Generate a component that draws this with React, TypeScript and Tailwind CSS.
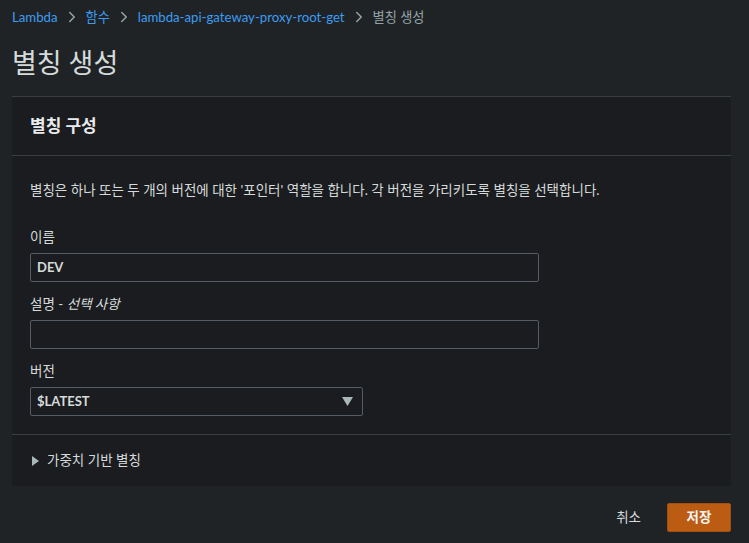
import { ChevronRight } from "lucide-react";

const font = { fontFamily: 'Lato, "Noto Sans CJK KR", sans-serif' };

function Crumb({ label, last }: { label: string; last?: boolean }) {
  return (
    <span className="flex items-center">
      <span className={last ? "text-[#95a5a6]" : "text-[#3d9cf0]"}>{label}</span>
      {!last && <ChevronRight className="w-[18px] h-[18px] mx-[5px] text-[#95a5a6]" strokeWidth={2} />}
    </span>
  );
}

export default function App() {
  return (
    <div
      className="w-[749px] h-[543px] bg-[#1f2326] text-[#d5dbdb] overflow-hidden"
      style={font}
    >
      <div className="pl-3 pr-[18px] pt-[7px]">
        {/* breadcrumb */}
        <nav className="flex items-center text-[13.2px] leading-[20px]">
          <Crumb label="Lambda" />
          <Crumb label="함수" />
          <Crumb label="lambda-api-gateway-proxy-root-get" />
          <Crumb label="별칭 생성" last />
        </nav>

        <h1 className="text-[27px] leading-[34px] mt-[19px] text-[#d5dbdb]">별칭 생성</h1>

        {/* panel */}
        <section className="mt-[16px] bg-[#1b1c1f] border-t border-[#3b3e41]">
          <div className="h-[59px] px-[18px] flex items-center border-b border-[#3b3e41]">
            <h2 className="text-[17px] font-bold text-[#e9ebed]">별칭 구성</h2>
          </div>

          <div className="px-[18px] pt-[24px] pb-[18px] text-[13.5px]">
            <p className="leading-[20px] text-[#d5dbdb]">
              별칭은 하나 또는 두 개의 버전에 대한 '포인터' 역할을 합니다. 각 버전을 가리키도록 별칭을 선택합니다.
            </p>

            <label className="block mt-[27px] leading-[20px]">이름</label>
            <div className="mt-[6px] w-[509px] h-[29px] border border-[#545b64] rounded-[2px] flex items-center px-[6px] text-[13px] font-bold text-[#d5dbdb]">
              DEV
            </div>

            <label className="block mt-[12px] leading-[20px]">
              설명 - <i>선택 사항</i>
            </label>
            <div className="mt-[6px] w-[509px] h-[29px] border border-[#545b64] rounded-[2px]" />

            <label className="block mt-[12px] leading-[20px]">버전</label>
            <div className="mt-[6px] w-[333px] h-[29px] border border-[#545b64] rounded-[2px] flex items-center justify-between px-[6px] pr-[9px] text-[13px] font-bold">
              <span>$LATEST</span>
              <svg width="11" height="9" viewBox="0 0 11 9">
                <polygon points="0,0 11,0 5.5,9" fill="#aab7b8" />
              </svg>
            </div>
          </div>

          <div className="border-t border-[#3b3e41] h-[52px] px-[20px] flex items-center gap-[8px] text-[13.5px]">
            <svg width="7" height="10" viewBox="0 0 7 10">
              <polygon points="0,0 7,5 0,10" fill="#aab7b8" />
            </svg>
            <span className="text-[#d5dbdb]">가중치 기반 별칭</span>
          </div>
        </section>

        {/* footer buttons */}
        <div className="flex justify-end items-center mt-[17px] gap-[26px]">
          <span className="text-[13.5px] text-[#d5dbdb]">취소</span>
          <button className="w-[64px] h-[29px] bg-[#bb5c12] border border-[#a24f10] rounded-[2px] text-[13.5px] font-bold text-[#f2f3f3]">
            저장
          </button>
        </div>
      </div>
    </div>
  );
}
